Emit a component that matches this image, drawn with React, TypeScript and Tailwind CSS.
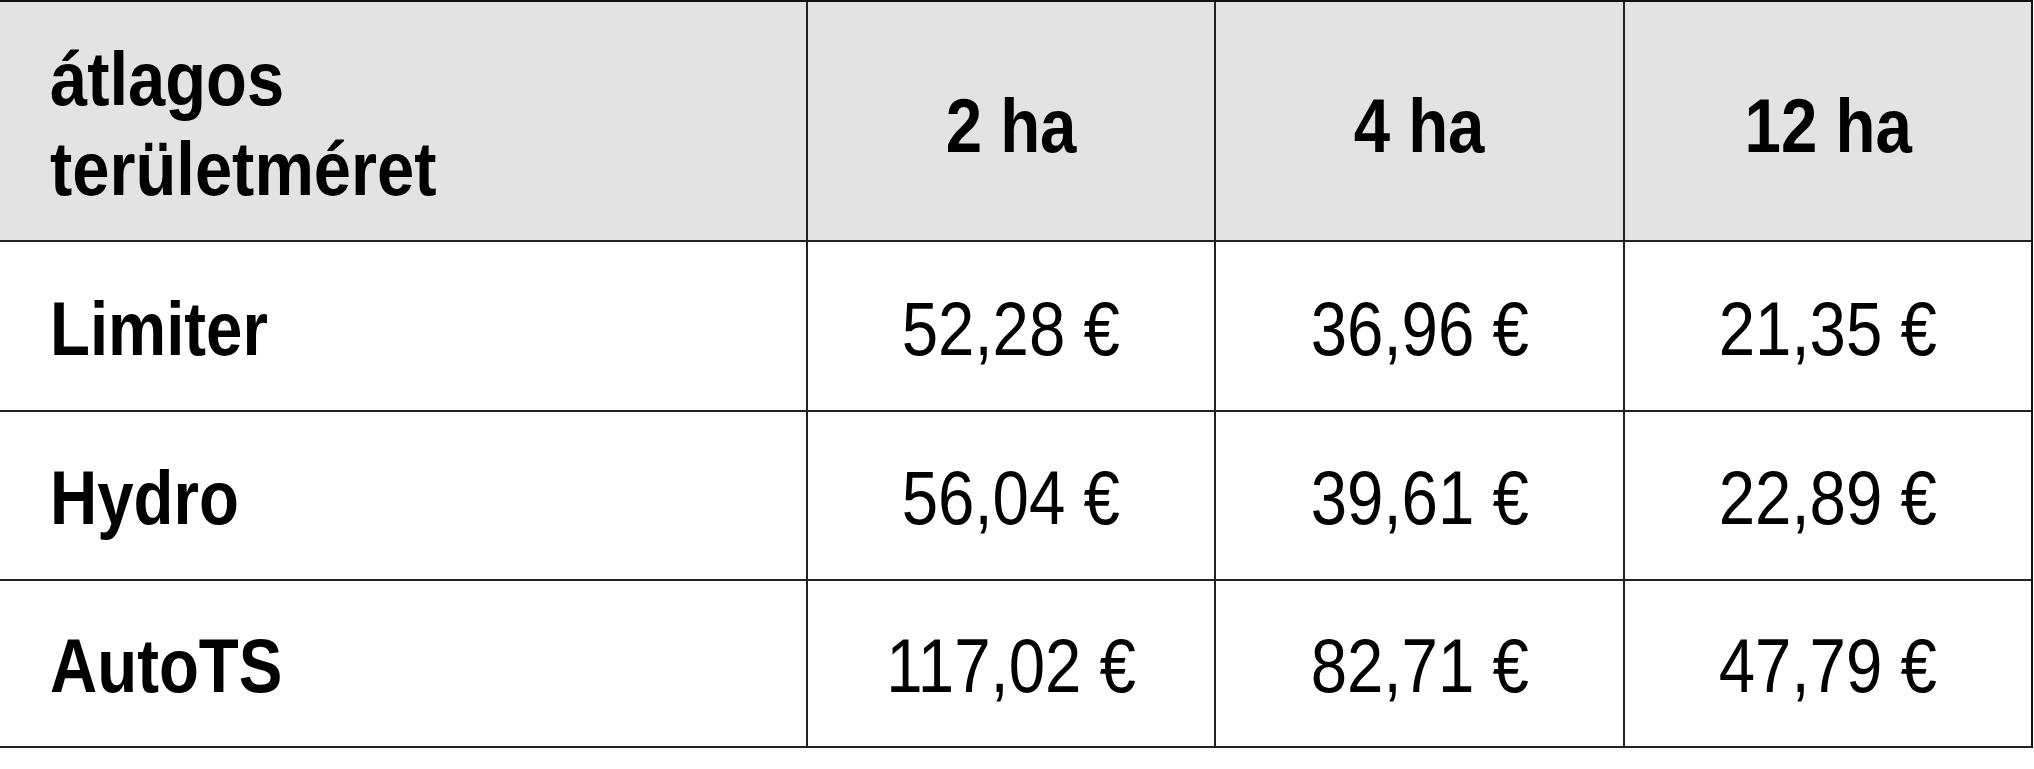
const cols = ["2 ha", "4 ha", "12 ha"];

const rows = [
  { name: "Limiter", values: ["52,28 €", "36,96 €", "21,35 €"], h: "h-[170px]" },
  { name: "Hydro", values: ["56,04 €", "39,61 €", "22,89 €"], h: "h-[169px]" },
  { name: "AutoTS", values: ["117,02 €", "82,71 €", "47,79 €"], h: "h-[167px]" },
];

export default function App() {
  return (
    <div className="w-[2034px] h-[769px] bg-white text-black font-['Liberation_Sans',Arial,sans-serif]">
      <div className="w-[2033px] grid grid-cols-[806px_408px_409px_408px] border-t-2 border-r-2 border-[#111]">
        {/* header */}
        <div className="h-[240px] bg-[#e3e3e3] border-b-2 border-[#222] flex items-center pl-[50px] pt-[6px] text-[76px] font-bold leading-[90px]">
          <div className="flex flex-col origin-left scale-x-[0.88]">
            <span>átlagos</span>
            <span>területméret</span>
          </div>
        </div>
        {cols.map((c) => (
          <div
            key={c}
            className="h-[240px] bg-[#e3e3e3] border-b-2 border-l-2 border-[#222] flex items-center justify-center pt-[10px] text-[76px] font-bold"
          >
            <span className="inline-block scale-x-[0.86]">{c}</span>
          </div>
        ))}

        {/* body */}
        {rows.map((r) => (
          <div key={r.name} className="contents">
            <div className={`${r.h} border-b-2 border-[#222] flex items-center pl-[50px] pt-[5px] text-[76px] font-bold`}>
              <span className="inline-block origin-left scale-x-[0.86]">{r.name}</span>
            </div>
            {r.values.map((v) => (
              <div
                key={v}
                className={`${r.h} border-b-2 border-l-2 border-[#222] flex items-center justify-center pt-[5px] text-[76px]`}
              >
                <span className="inline-block scale-x-[0.86]">{v}</span>
              </div>
            ))}
          </div>
        ))}
      </div>
    </div>
  );
}
